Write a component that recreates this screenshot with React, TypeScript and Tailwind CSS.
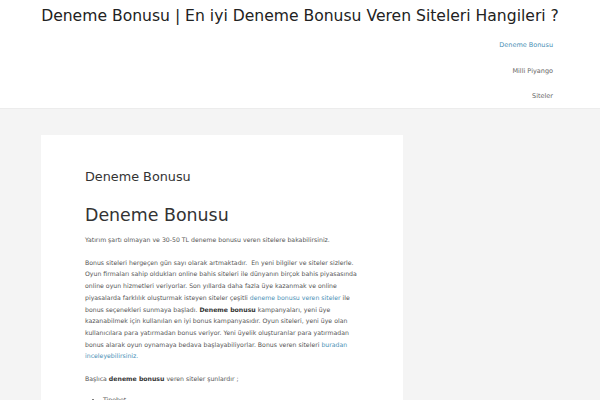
import React from "react";

const font = { fontFamily: '"DejaVu Sans", Verdana, sans-serif' };

export default function App() {
  return (
    <div className="w-[600px] h-[400px] overflow-hidden bg-[#f4f4f4]" style={font}>
      <header className="bg-white border-b border-[#ececec] h-[109px] px-[41px]">
        <div className="flex flex-col">
          <h1 className="text-[15.6px] leading-[32px] text-[#222] text-center whitespace-nowrap">
            Deneme Bonusu | En iyi Deneme Bonusu Veren Siteleri Hangileri ?
          </h1>
          <nav className="flex flex-col items-end pr-[6px] pt-[1px] text-[6.5px] text-[#666]">
            <a className="h-[25.5px] leading-[25.5px] text-[#4a8fb5]">Deneme Bonusu</a>
            <a className="h-[25.5px] leading-[25.5px]">Milli Piyango</a>
            <a className="h-[25.5px] leading-[25.5px]">Siteler</a>
          </nav>
        </div>
      </header>
      <main className="px-[41px] pt-[26px]">
        <article className="w-[362px] bg-white pl-[44px] pr-[10px] pt-[32px] pb-4 text-[#555] whitespace-nowrap">
          <h2 className="text-[12.8px] leading-[20px] text-[#333]">Deneme Bonusu</h2>
          <h1 className="text-[17.4px] leading-[28px] text-[#333] mt-[14px]">Deneme Bonusu</h1>
          <p className="text-[6.2px] leading-[11.7px] mt-[5px]">
            Yatırım şartı olmayan ve 30-50 TL deneme bonusu veren sitelere bakabilirsiniz.
          </p>
          <p className="text-[6.2px] leading-[11.7px] mt-[11px]">
            Bonus siteleri hergeçen gün sayı olarak artmaktadır.&nbsp; En yeni bilgiler ve siteler sizlerle.
            <br />
            Oyun firmaları sahip oldukları online bahis siteleri ile dünyanın birçok bahis piyasasında
            <br />
            online oyun hizmetleri veriyorlar. Son yıllarda daha fazla üye kazanmak ve online
            <br />
            piyasalarda farklılık oluşturmak isteyen siteler çeşitli{" "}
            <a className="text-[#4a8fb5]">deneme bonusu veren siteler</a> ile
            <br />
            bonus seçenekleri sunmaya başladı.{" "}
            <strong className="font-bold text-[#333]">Deneme bonusu</strong> kampanyaları, yeni üye
            <br />
            kazanabilmek için kullanılan en iyi bonus kampanyasıdır. Oyun siteleri, yeni üye olan
            <br />
            kullanıcılara para yatırmadan bonus veriyor. Yeni üyelik oluşturanlar para yatırmadan
            <br />
            bonus alarak oyun oynamaya bedava başlayabiliyorlar. Bonus veren siteleri{" "}
            <a className="text-[#4a8fb5]">
              buradan
              <br />
              inceleyebilirsiniz.
            </a>
          </p>
          <p className="text-[6.2px] leading-[11.7px] mt-[11px]">
            Başlıca <strong className="font-bold text-[#333]">deneme bonusu</strong> veren siteler şunlardır ;
          </p>
          <ul className="list-disc pl-[18px] text-[6.2px] leading-[11.7px] mt-[9px]">
            <li>Tipobet</li>
            <li>Betboo</li>
          </ul>
        </article>
      </main>
    </div>
  );
}
